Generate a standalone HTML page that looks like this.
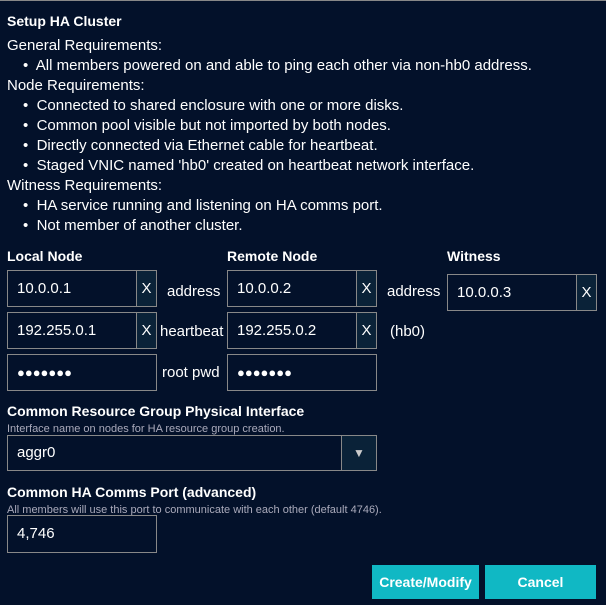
<!DOCTYPE html>
<html><head><style>
*{box-sizing:border-box;margin:0;padding:0}
body{width:606px;height:605px;background:#03112a;color:#fff;font-family:"Liberation Sans",sans-serif;font-size:15px;position:relative;overflow:hidden;border-top:1px solid #888}
.t{position:absolute;white-space:nowrap;line-height:20px}
.b{font-weight:bold;font-size:14px}
.s{font-size:11px;color:#aab;line-height:12px}
.in{position:absolute;border:1px solid #888;height:37px;background:#03112a;padding-left:9px;line-height:35px}
.x{position:absolute;right:0;top:0;width:20px;height:35px;background:#0a2238;border-left:1px solid #888;text-align:center;line-height:35px}
.btn{position:absolute;background:#10b8c4;font-weight:bold;font-size:14px;text-align:center;line-height:34px;height:34px;top:564px}
</style></head><body>
<div class="t b" style="left:7px;top:10px">Setup HA Cluster</div>
<div class="t" style="left:7px;top:35px">General Requirements:</div>
<div class="t" style="left:23px;top:55px">•&nbsp; All members powered on and able to ping each other via non-hb0 address.</div>
<div class="t" style="left:7px;top:75px">Node Requirements:</div>
<div class="t" style="left:23px;top:95px">•&nbsp; Connected to shared enclosure with one or more disks.</div>
<div class="t" style="left:23px;top:115px">•&nbsp; Common pool visible but not imported by both nodes.</div>
<div class="t" style="left:23px;top:135px">•&nbsp; Directly connected via Ethernet cable for heartbeat.</div>
<div class="t" style="left:23px;top:155px">•&nbsp; Staged VNIC named 'hb0' created on heartbeat network interface.</div>
<div class="t" style="left:7px;top:175px">Witness Requirements:</div>
<div class="t" style="left:23px;top:195px">•&nbsp; HA service running and listening on HA comms port.</div>
<div class="t" style="left:23px;top:215px">•&nbsp; Not member of another cluster.</div>
<div class="t b" style="left:7px;top:245px">Local Node</div>
<div class="t b" style="left:227px;top:245px">Remote Node</div>
<div class="t b" style="left:447px;top:245px">Witness</div>
<div class="in" style="left:7px;top:269px;width:150px">10.0.0.1<div class="x">X</div></div>
<div class="in" style="left:7px;top:311px;width:150px">192.255.0.1<div class="x">X</div></div>
<div class="in" style="left:7px;top:353px;width:150px;font-size:13px">●●●●●●●</div>
<div class="in" style="left:227px;top:269px;width:150px">10.0.0.2<div class="x">X</div></div>
<div class="in" style="left:227px;top:311px;width:150px">192.255.0.2<div class="x">X</div></div>
<div class="in" style="left:227px;top:353px;width:150px;font-size:13px">●●●●●●●</div>
<div class="in" style="left:447px;top:273px;width:150px">10.0.0.3<div class="x">X</div></div>
<div class="t" style="left:167px;top:281px">address</div>
<div class="t" style="left:160px;top:321px">heartbeat</div>
<div class="t" style="left:162px;top:362px">root pwd</div>
<div class="t" style="left:387px;top:281px">address</div>
<div class="t" style="left:390px;top:321px">(hb0)</div>
<div class="t b" style="left:7px;top:400px">Common Resource Group Physical Interface</div>
<div class="t s" style="left:7px;top:422px">Interface name on nodes for HA resource group creation.</div>
<div class="in" style="left:7px;top:434px;width:370px;height:36px;line-height:34px">aggr0<div class="x" style="width:35px;height:34px;line-height:34px;font-size:12px;color:#ccc">▼</div></div>
<div class="t b" style="left:7px;top:481px">Common HA Comms Port (advanced)</div>
<div class="t s" style="left:7px;top:503px">All members will use this port to communicate with each other (default 4746).</div>
<div class="in" style="left:7px;top:514px;width:150px;height:38px;line-height:36px">4,746</div>
<div class="btn" style="left:372px;width:107px">Create/Modify</div>
<div class="btn" style="left:485px;width:111px">Cancel</div>
</body></html>
